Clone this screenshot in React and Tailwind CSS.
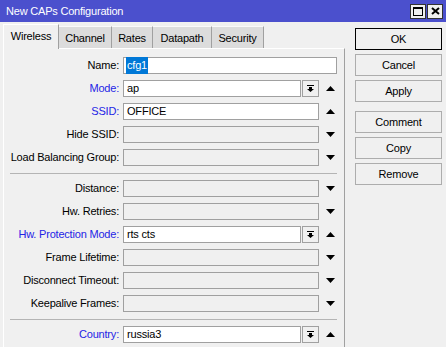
function UpArrow() {
  return (
    <svg width="9" height="5" viewBox="0 0 9 5" className="ml-[7px]">
      <path d="M4.5 0 L9 5 L0 5 Z" fill="#000" />
    </svg>
  );
}

function DownArrow() {
  return (
    <svg width="9" height="5" viewBox="0 0 9 5" className="ml-[7px]">
      <path d="M0 0 L9 0 L4.5 5 Z" fill="#000" />
    </svg>
  );
}

function DropButton() {
  return (
    <div className="ml-px flex h-[17px] w-[17px] items-center justify-center border border-[#a0a0a0] bg-[#f0f0f0]">
      <svg width="7" height="7" viewBox="0 0 7 7">
        <rect x="0" y="0" width="7" height="1" fill="#000" />
        <path d="M2 2 L5 2 L5 4 L7 4 L3.5 7 L0 4 L2 4 Z" fill="#000" />
      </svg>
    </div>
  );
}

function Field({ width, value, disabled, selected }) {
  return (
    <div
      className={`flex h-[17px] items-center border border-[#a0a0a0] px-[2px] ${width} ${disabled ? 'bg-[#f0f0f0]' : 'bg-white'}`}
    >
      {selected ? (
        <span className="bg-[#0078d7] px-px text-white">{value}</span>
      ) : (
        <span className="px-px">{value}</span>
      )}
    </div>
  );
}

function Row({ label, blue, children }) {
  return (
    <div className="flex h-[17px] items-center">
      <div className={`w-[115px] text-right ${blue ? 'text-[#2424e6]' : 'text-black'}`}>{label}:</div>
      <div className="ml-[4px] flex h-full items-center">{children}</div>
    </div>
  );
}

function Separator() {
  return <div className="ml-[6px] h-[2px] w-[327px] border-b border-[#b4b4b4]" />;
}

function Combo({ label, value, blue }) {
  return (
    <Row label={label} blue={blue}>
      <Field width="w-[178px]" value={value} />
      <DropButton />
      <UpArrow />
    </Row>
  );
}

function Empty({ label }) {
  return (
    <Row label={label}>
      <Field width="w-[196px]" disabled />
      <DownArrow />
    </Row>
  );
}

function Btn({ children, primary }) {
  return (
    <div
      className={`flex h-[22px] w-[87px] items-center justify-center bg-[#f0f0f0] ${primary ? 'border border-black' : 'border border-[#adadad]'}`}
    >
      {children}
    </div>
  );
}

export default function App() {
  const tabs = [
    { name: 'Channel', w: 'w-[53px]' },
    { name: 'Rates', w: 'w-[41px]' },
    { name: 'Datapath', w: 'w-[59px]' },
    { name: 'Security', w: 'w-[52px]' },
  ];

  return (
    <div
      className="flex h-[347px] w-[446px] flex-col overflow-hidden bg-[#f0f0f0] text-[11px] tracking-[-0.2px] text-black"
      style={{ fontFamily: '"Liberation Sans", Arial, sans-serif' }}
    >
      <div className="flex h-[22px] shrink-0 items-center bg-[#4b50cd] pl-[6px]">
        <span className="text-white">New CAPs Configuration</span>
        <div className="ml-auto mr-[3px] flex gap-px">
          <div className="flex h-[15px] w-[16px] items-center justify-center border border-[#333] bg-[#f0f0f0]">
            <div className="h-[9px] w-[10px] border border-t-2 border-black" />
          </div>
          <div className="flex h-[15px] w-[16px] items-center justify-center border border-[#333] bg-[#f0f0f0]">
            <svg width="9" height="8" viewBox="0 0 9 8">
              <path d="M1 1 L8 7 M8 1 L1 7" stroke="#000" strokeWidth="2" />
            </svg>
          </div>
        </div>
      </div>

      <div className="flex flex-1 pl-[3px]">
        <div className="flex w-[342px] flex-col">
          <div className="flex h-[26px] items-end">
            <div className="z-10 -mb-px flex h-[25px] w-[56px] items-center justify-center border-l border-t border-r border-l-white border-t-white border-r-[#a0a0a0] bg-[#f0f0f0] pb-[2px]">
              Wireless
            </div>
            {tabs.map((t) => (
              <div
                key={t.name}
                className={`flex h-[22px] items-center justify-center border-t border-r border-t-[#fafafa] border-r-[#a0a0a0] bg-[#dcdcdc] pt-px ${t.w}`}
              >
                {t.name}
              </div>
            ))}
          </div>

          <div className="flex flex-1 flex-col gap-[6px] border-l border-t border-r border-l-white border-t-white border-r-[#a0a0a0] pt-[8px]">
            <Row label="Name">
              <Field width="w-[214px]" value="cfg1" selected />
            </Row>
            <Combo label="Mode" value="ap" blue />
            <Row label="SSID" blue>
              <Field width="w-[196px]" value="OFFICE" />
              <UpArrow />
            </Row>
            <Empty label="Hide SSID" />
            <Empty label="Load Balancing Group" />
            <Separator />
            <Empty label="Distance" />
            <Empty label="Hw. Retries" />
            <Combo label="Hw. Protection Mode" value="rts cts" blue />
            <Empty label="Frame Lifetime" />
            <Empty label="Disconnect Timeout" />
            <Empty label="Keepalive Frames" />
            <Separator />
            <Combo label="Country" value="russia3" blue />
          </div>
        </div>

        <div className="ml-[10px] flex w-[87px] flex-col pt-[6px]">
          <div className="flex flex-col gap-[4px]">
            <Btn primary>OK</Btn>
            <Btn>Cancel</Btn>
            <Btn>Apply</Btn>
          </div>
          <div className="mt-[9px] flex flex-col gap-[4px]">
            <Btn>Comment</Btn>
            <Btn>Copy</Btn>
            <Btn>Remove</Btn>
          </div>
        </div>
      </div>
    </div>
  );
}
